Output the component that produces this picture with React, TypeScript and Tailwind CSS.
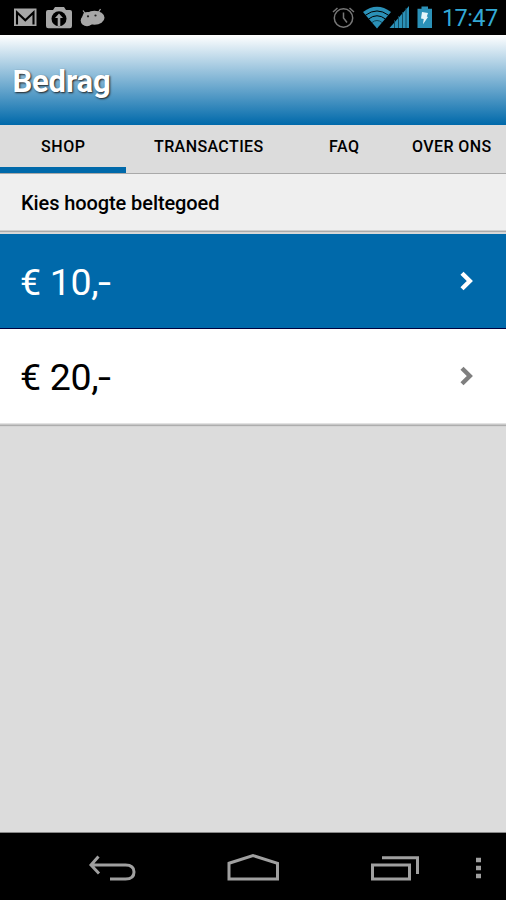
import React from "react";

function StatusBar() {
  return (
    <header className="flex h-[35px] shrink-0 items-start bg-black">
      <svg width="120" height="35" viewBox="0 0 120 35" fill="#a7a7a7">
        <path d="M14 8.500h22.500V26H14z" />
        <path d="M17 24.500V12.500l8.300 7.800 8.200-7.800v12" fill="none" stroke="#000" strokeWidth="2.100" />
        <path d="M48 10q-2 0-2 2v14q0 2.300 2.300 2.300h21.500q2.200 0 2.200-2.300V12q0-2-2-2h-4l-2-3h-9l-2 3z" />
        <circle cx="59" cy="18.700" r="7.500" fill="#000" />
        <path d="m59 13.500 4 4.500h-2.700v8h-2.600v-8H55z" />
        <ellipse cx="94.500" cy="17.700" rx="10" ry="7" />
        <ellipse cx="87" cy="20.500" rx="6.300" ry="5.800" />
        <ellipse cx="87.500" cy="16.500" rx="5" ry="4.500" />
        <path d="m83 10.500 3 4M100.500 9l-2.500 4" fill="none" stroke="#a7a7a7" strokeWidth="1.200" />
        <circle cx="88" cy="16.300" r="1.100" fill="#222" /><circle cx="95.500" cy="15.500" r="1.100" fill="#222" />
      </svg>
      <svg className="ml-auto" width="110" height="35" viewBox="330 0 110 35">
        <g fill="none" stroke="#777" strokeWidth="1.500">
          <circle cx="343.500" cy="18" r="9.200" />
          <path d="M343.500 12.500V18l3.500 4.500M333 12l4.500-4M349.500 8l4.500 4" />
        </g>
        <path d="M363 12q14-10.500 28 0L377 28.500z" fill="#2b91b8" />
        <g fill="none" stroke="#000" strokeWidth="1">
          <path d="M365.500 15.200q11.500-8.500 23 0M368.500 19q8.500-6.500 17 0" />
          <path d="M372 22.500q5-4 10 0" stroke="#10465a" />
        </g>
        <path d="M389.500 28 409 6v22z" fill="#2b91b8" />
        <path d="M394.500 20v8M398.500 16v12M402.500 12v16M406 8v20" stroke="#10465a" strokeWidth=".9" />
        <path d="M421.500 6.500h6.500v2.300h4V28h-14.500V8.800h4z" fill="#2b91b8" />
        <path d="m422 12 6 1-1.200 3.500 1.200.5-5 7.200.7-5.200-2.700-.6z" fill="#e5f5fa" />
      </svg>
      <span className="mt-[4px] w-[66px] pl-[2px] text-[23.500px] leading-[28px] tracking-[-0.600px] whitespace-nowrap text-[#33a9d5]">17:47</span>
    </header>
  );
}

function Tab({ label, position }: { label: string; position: string }) {
  return (
    <button className={`flex h-[49px] items-start border-b border-[#a9a9a9] pt-[12px] text-left text-[16px] leading-[20px] font-medium whitespace-nowrap ${position}`}>
      {label}
    </button>
  );
}

function AmountRow({ amount, selected = false }: { amount: string; selected?: boolean }) {
  return (
    <button className={`flex w-full shrink-0 items-center justify-between pr-[32px] pl-[20px] text-left text-[37.500px] leading-[44px] ${selected ? "h-[95px] border-b border-[#00003f] bg-[#0069aa] text-white" : "h-[94px] bg-white text-black"}`}>
      <span className="pt-px tracking-[-0.300px] whitespace-nowrap">
        {amount}<span className="inline-block origin-left scale-x-125">-</span>
      </span>
      <svg width="14" height="20" viewBox="0 0 14 20">
        <path d="m2 2.300 7.800 7.700L2 17.700" fill="none" stroke={selected ? "#fff" : "#7f7f7f"} strokeWidth="4.400" />
      </svg>
    </button>
  );
}

function NavigationBar() {
  return (
    <nav className="h-[68px] shrink-0 border-t border-[#888] bg-black">
      <svg width="506" height="67" viewBox="0 833 506 67" fill="none" stroke="#a0a0a0" strokeWidth="3">
        <path d="M98.500 856.500 91 865l8 8.500M91 865h34.500q8.500 0 8.500 7t-8.500 7H110" />
        <path d="M229 863.300 253 855.500l24.500 7.800V879H229z" />
        <path d="M372.500 865h37v14h-37zM382 857.700h35.500V874" />
        <path d="M476 860h5M476 868h5M476 876h5" strokeWidth="4.500" />
      </svg>
    </nav>
  );
}

export default function App() {
  return (
    <main className="flex h-[900px] w-[506px] flex-col overflow-hidden bg-[#dcdcdc] font-[Roboto,sans-serif] text-black">
      <StatusBar />
      <div className="flex h-[90px] shrink-0 items-center bg-[linear-gradient(to_bottom,#fff,#0069aa)] pt-[4px] pl-[12.500px]">
        <h1 className="text-[31px] leading-[38px] font-bold tracking-[-0.200px] text-white [text-shadow:1px_1px_2px_#222]">Bedrag</h1>
      </div>
      <div className="flex h-[49px] shrink-0">
        <div className="flex w-[126px] flex-col">
          <button className="flex h-[42px] pt-[12px] pl-[41px] text-[16px] leading-[20px] font-medium tracking-[0.600px]">SHOP</button>
          <div className="h-[6px] bg-[#0069aa]" />
          <div className="h-px bg-[#a9a9a9]" />
        </div>
        <Tab label="TRANSACTIES" position="w-[174px] pl-[28px] tracking-[0.400px]" />
        <Tab label="FAQ" position="w-[94px] pl-[29px] tracking-[0.500px]" />
        <Tab label="OVER ONS" position="w-[112px] pl-[18px] tracking-[0.400px]" />
      </div>
      <section className="flex h-[56px] shrink-0 items-center bg-[#efefef] pt-[1px] pl-[21px]">
        <h2 className="text-[20px] leading-[26px] font-medium tracking-[-0.090px]">Kies hoogte beltegoed</h2>
      </section>
      <div className="h-[4px] shrink-0 bg-[linear-gradient(to_bottom,#cfcfcf_0_1px,#aaa_1px_2px,#d5d5d5_2px_3px,#d8d8d8_3px_4px)]" />
      <AmountRow amount="€ 10," selected />
      <AmountRow amount="€ 20," />
      <div className="h-[4px] shrink-0 bg-[linear-gradient(to_bottom,#e2e2e2_0_1px,#c8c8c8_1px_2px,#adadad_2px_3px,#d5d5d5_3px_4px)]" />
      <div className="flex-1 bg-[#dcdcdc]" />
      <NavigationBar />
    </main>
  );
}
